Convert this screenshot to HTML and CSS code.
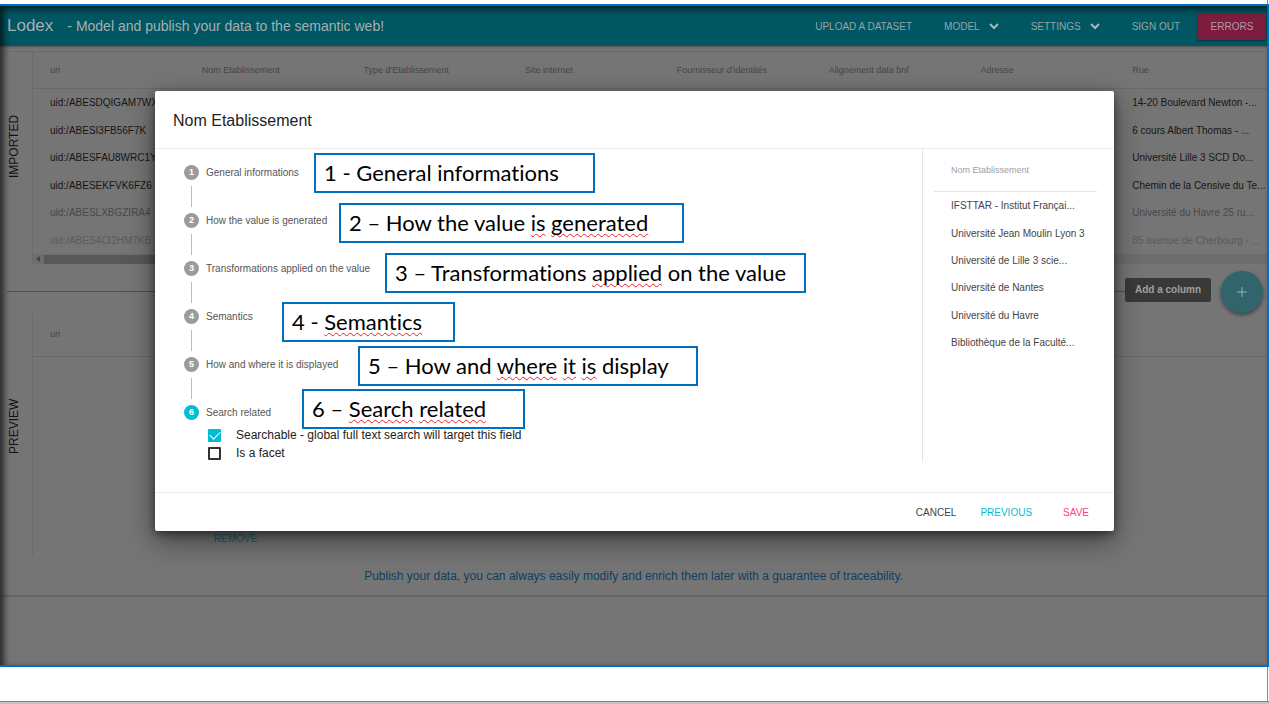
FILE: index.html
```html
<!DOCTYPE html>
<html lang="fr">
<head>
<meta charset="utf-8">
<title>Lodex</title>
<link rel="stylesheet" href="styles.css">
</head>
<body>
<div class="slide">
  <div class="frame">
    <header class="appbar">
      <h1 class="brand">Lodex</h1>
      <p class="tagline">- Model and publish your data to the semantic web!</p>
      <nav class="nav">
        <button class="nav-item">UPLOAD A DATASET</button>
        <button class="nav-item">MODEL <svg class="chevron" viewBox="0 0 10 7"><path d="M1 1l4 4 4-4"/></svg></button>
        <button class="nav-item">SETTINGS <svg class="chevron" viewBox="0 0 10 7"><path d="M1 1l4 4 4-4"/></svg></button>
        <button class="nav-item">SIGN OUT</button>
        <button class="errors">ERRORS</button>
      </nav>
    </header>

    <section class="panel imported">
      <h2 class="side-label">IMPORTED</h2>
      <div class="panel-body">
        <table class="data">
          <colgroup><col class="c-a"><col class="c-b"><col class="c-b"><col class="c-a"><col class="c-a"><col class="c-a"><col class="c-a"><col></colgroup>
          <thead>
            <tr><th>uri</th><th>Nom Etablissement</th><th>Type d'Etablissement</th><th>Site internet</th><th>Fournisseur d'identités</th><th>Alignement data bnf</th><th>Adresse</th><th>Rue</th></tr>
          </thead>
          <tbody>
            <tr><td>uid:/ABESDQIGAM7WX</td><td colspan="6"></td><td>14-20 Boulevard Newton -...</td></tr>
            <tr><td>uid:/ABESI3FB56F7K</td><td colspan="6"></td><td>6 cours Albert Thomas - ...</td></tr>
            <tr><td>uid:/ABESFAU8WRC1Y</td><td colspan="6"></td><td>Université Lille 3 SCD Do...</td></tr>
            <tr><td>uid:/ABESEKFVK6FZ6</td><td colspan="6"></td><td>Chemin de la Censive du Te...</td></tr>
            <tr class="fade-1"><td>uid:/ABESLXBGZIRA4</td><td colspan="6"></td><td>Université du Havre 25 ru...</td></tr>
            <tr class="fade-2"><td>uid:/ABES4CI2HM7KB</td><td colspan="6"></td><td>85 avenue de Cherbourg - ...</td></tr>
          </tbody>
        </table>
        <div class="scrollbar">
          <svg class="arrow" viewBox="0 0 4 6"><path d="M4 0v6L0 3z"/></svg>
          <div class="thumb"></div>
        </div>
      </div>
    </section>

    <div class="add-row">
      <div class="rule"></div>
      <span class="tooltip" id="add-label">Add a column</span>
      <button class="fab" aria-labelledby="add-label"><svg viewBox="0 0 12 12"><path d="M6 1v10M1 6h10"/></svg></button>
    </div>

    <section class="panel preview">
      <h2 class="side-label">PREVIEW</h2>
      <div class="panel-body">
        <div class="preview-head">uri</div>
        <button class="remove">REMOVE</button>
      </div>
    </section>
    <a class="publish" href="#">Publish your data, you can always easily modify and enrich them later with a guarantee of traceability.</a>
  </div>

  <div class="dialog" role="dialog" aria-labelledby="dialog-title">
    <h2 class="dialog-title" id="dialog-title">Nom Etablissement</h2>
    <div class="dialog-body">
      <div class="stepper">
        <ol class="steps">
          <li class="step"><span class="num">1</span>General informations</li>
          <li class="step"><span class="num">2</span>How the value is generated</li>
          <li class="step"><span class="num">3</span>Transformations applied on the value</li>
          <li class="step"><span class="num">4</span>Semantics</li>
          <li class="step"><span class="num">5</span>How and where it is displayed</li>
          <li class="step active"><span class="num">6</span>Search related</li>
        </ol>
        <label class="check"><input type="checkbox" checked>Searchable - global full text search will target this field</label>
        <label class="check"><input type="checkbox">Is a facet</label>
      </div>
      <aside class="sample">
        <table class="sample-table">
          <thead><tr><th>Nom Etablissement</th></tr></thead>
          <tbody>
            <tr><td>IFSTTAR - Institut Françai...</td></tr>
            <tr><td>Université Jean Moulin Lyon 3</td></tr>
            <tr><td>Université de Lille 3 scie...</td></tr>
            <tr><td>Université de Nantes</td></tr>
            <tr><td>Université du Havre</td></tr>
            <tr><td>Bibliothèque de la Faculté...</td></tr>
          </tbody>
        </table>
      </aside>
    </div>
    <footer class="dialog-actions">
      <button class="action">CANCEL</button>
      <button class="action primary">PREVIOUS</button>
      <button class="action secondary">SAVE</button>
    </footer>
  </div>

  <div class="note note-1">1 - General informations</div>
  <div class="note note-2">2 – How the value <u>is</u> <u>generated</u></div>
  <div class="note note-3">3 – Transformations <u>applied</u> on the value</div>
  <div class="note note-4">4 - <u>Semantics</u></div>
  <div class="note note-5">5 – How and <u>where</u> <u>it</u> <u>is</u> display</div>
  <div class="note note-6">6 – <u>Search</u> <u>related</u></div>
</div>
</body>
</html>
```
FILE: styles.css
```css
* { box-sizing: border-box; }
body {
  margin: 0;
  background: #c3c3c0;
  font-family: "Liberation Sans", Arial, sans-serif;
  font-size: 10px;
}
h1, h2, p, ol { margin: 0; padding: 0; font-weight: normal; }
button {
  border: 0;
  padding: 0;
  background: none;
  font: inherit;
  color: inherit;
  cursor: pointer;
}
table { border-collapse: collapse; width: 100%; table-layout: fixed; }
th, td { padding: 0; text-align: left; font-weight: normal; white-space: nowrap; }

.slide {
  position: relative;
  display: flex;
  flex-direction: column;
  min-height: calc(100vh - 2px);
  padding: 4px 0 34px;
  background: linear-gradient(#8a8a8a, #8a8a8a) right 1px top / 1px 100% no-repeat #fff;
  border-bottom: 1px solid #808080;
}
.frame {
  position: relative;
  flex: 1;
  display: flex;
  flex-direction: column;
  background: #757575;
  border: 2px solid #0070c0;
  border-left: 0;
}
.frame::after {
  content: "";
  position: absolute;
  inset: 0;
  box-shadow: inset 4px 3px 6px rgba(0, 0, 0, .65);
  clip-path: inset(0);
  pointer-events: none;
}

.appbar {
  display: flex;
  align-items: center;
  height: 40px;
  padding: 0 1px 0 7px;
  background: #005661;
  color: #a3b0b2;
  box-shadow: 0 1px 2px rgba(0, 0, 0, .3);
}
.brand { font-size: 17px; margin-right: 14px; }
.tagline { font-size: 14px; }
.nav { display: flex; align-items: center; gap: 32px; margin-left: auto; }
.nav-item { display: flex; align-items: center; gap: 9px; color: #98a3a5; }
.chevron { width: 10px; height: 7px; fill: none; stroke: #a9b8ba; stroke-width: 2; }
.errors {
  width: 68px;
  height: 27px;
  margin-left: -14px;
  border-radius: 2px;
  background: #7c1c3f;
  color: #b49aa4;
  box-shadow: 0 1px 2px rgba(0, 0, 0, .4);
}

.panel { display: flex; }
.imported { margin-top: 5px; border-top: 1px solid #6d6d6d; }
.side-label {
  flex: 0 0 32px;
  padding: 24px 6px 0 0;
  font-size: 12px;
  line-height: 16px;
  text-align: center;
  color: #111;
  writing-mode: vertical-rl;
  transform: rotate(180deg);
}
.preview .side-label { padding-top: 18px; }
.panel-body { flex: 1; min-width: 0; border-left: 1px solid #6b6b6b; }
.c-a { width: 12.3%; }
.c-b { width: 13.1%; }
.data { height: 202px; }
.data th {
  height: 36px;
  padding-left: 17px;
  font-size: 9px;
  color: #464646;
  border-bottom: 1px solid #696969;
}
.data td { padding-left: 17px; color: #161616; }
.data .fade-1 td { color: #484848; }
.data .fade-2 td { color: #5a5a5a; }
.scrollbar { display: flex; align-items: center; height: 10px; background: #6d6d6d; }
.arrow { width: 4px; height: 6px; margin: 0 4px 0 3px; fill: #444; }
.thumb { width: 70%; height: 9px; background: #585858; }

.add-row { display: flex; align-items: center; height: 43px; margin: 6px 4px 0 7px; }
.rule { flex: 1; height: 1px; background: #4f4f4f; }
.tooltip {
  width: 86px;
  margin: 0 10px 4px 0;
  border-radius: 2px;
  background: #393939;
  color: #a0a0a0;
  font-size: 10px;
  font-weight: bold;
  line-height: 24px;
  text-align: center;
}
.fab {
  display: grid;
  place-items: center;
  width: 42px;
  height: 42px;
  border-radius: 50%;
  background: #2f656b;
  box-shadow: 0 2px 4px rgba(0, 0, 0, .45);
}
.fab svg { width: 12px; height: 12px; fill: none; stroke: #9db2b4; stroke-width: 1; }

.preview .panel-body { height: 244px; }
.preview-head {
  padding-left: 17px;
  font-size: 9px;
  line-height: 43px;
  color: #464646;
  border-bottom: 1px solid #696969;
}
.remove { margin: 176px 0 0 181px; color: #1d5c68; }
.publish {
  padding: 11px 0;
  border-bottom: 2px solid #666;
  font-size: 12px;
  line-height: 16px;
  text-align: center;
  text-decoration: none;
  color: #0c4064;
}

.dialog {
  position: absolute;
  top: 91px;
  left: 155px;
  right: 155px;
  background: #fff;
  border-radius: 2px;
  box-shadow: 0 10px 28px rgba(0, 0, 0, .45), 0 3px 8px rgba(0, 0, 0, .45);
}
.dialog-title {
  padding: 0 18px;
  border-bottom: 1px solid #ececec;
  font-size: 16px;
  line-height: 60px;
  height: 58px;
  color: #222;
}
.dialog-body { display: flex; padding: 0 17px 30px 29px; }
.stepper { flex: 1; padding-top: 16px; }
.steps { list-style: none; margin-bottom: 6px; }
.step {
  display: flex;
  flex-wrap: wrap;
  align-items: center;
  line-height: 15px;
  color: #555;
}
.step:not(:last-child)::after {
  content: "";
  width: 100%;
  height: 21px;
  margin: 6px 0 6px 7px;
  border-left: 1px solid #bdbdbd;
}
.num {
  width: 15px;
  margin-right: 7px;
  border-radius: 50%;
  background: #9b9b9b;
  color: #fff;
  font-size: 9px;
  font-weight: bold;
  text-align: center;
}
.active .num { background: #00bcd4; }
.check {
  display: flex;
  align-items: center;
  height: 18px;
  margin-left: 24px;
  font-size: 12px;
  color: #222;
}
.check input {
  appearance: none;
  display: grid;
  place-items: center;
  width: 13px;
  height: 13px;
  margin: 0 15px 0 0;
  border: 2px solid #333;
  border-radius: 1px;
}
.check input:checked { background: #00bcd4; border-color: #00bcd4; }
.check input:checked::after {
  content: "";
  width: 5px;
  height: 9px;
  margin-top: -3px;
  border: solid #fff;
  border-width: 0 1px 1px 0;
  rotate: 45deg;
}
.sample { width: 175px; height: 313px; padding-left: 11px; border-left: 1px solid #e6e6e6; }
.sample-table { height: 207px; }
.sample-table th {
  height: 42px;
  padding-left: 17px;
  font-size: 9px;
  color: #9e9e9e;
  border-bottom: 1px solid #e6e6e6;
}
.sample-table td { padding-left: 17px; color: #444; }
.dialog-actions {
  display: flex;
  justify-content: flex-end;
  height: 39px;
  padding: 0 25px;
  border-top: 1px solid #ececec;
}
.action { color: #444; }
.action.primary { margin: 0 31px 0 24px; color: #00bcd4; }
.action.secondary { color: #ff4081; }

.note {
  position: absolute;
  height: 40px;
  padding-left: 8px;
  border: 2px solid #0070c0;
  background: #fff;
  color: #000;
  font-family: Lato, "Open Sans", sans-serif;
  font-size: 22px;
  font-variant-ligatures: none;
  line-height: 36px;
  white-space: nowrap;
}
.note u {
  text-decoration: underline wavy #e8202c 1px;
  text-decoration-skip-ink: none;
  text-underline-offset: 2px;
}
.note-1 { left: 314px; top: 153px; width: 281px; }
.note-2 { left: 339px; top: 203px; width: 345px; }
.note-3 { left: 385px; top: 253px; width: 421px; }
.note-4 { left: 282px; top: 302px; width: 173px; }
.note-5 { left: 358px; top: 346px; width: 340px; }
.note-6 { left: 302px; top: 389px; width: 223px; }
```
